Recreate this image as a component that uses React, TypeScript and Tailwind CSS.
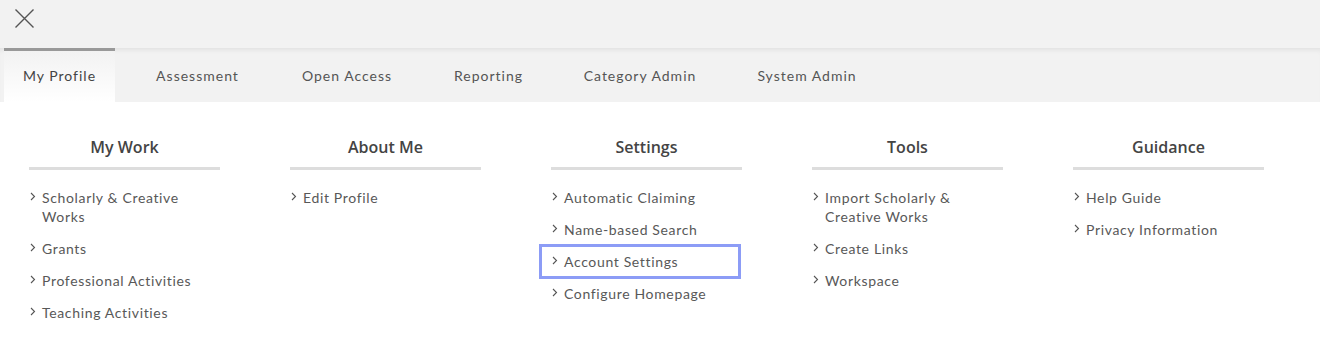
import React from "react";

const columns: { title: string; items: string[] }[] = [
  { title: "My Work", items: ["Scholarly & Creative Works", "Grants", "Professional Activities", "Teaching Activities"] },
  { title: "About Me", items: ["Edit Profile"] },
  { title: "Settings", items: ["Automatic Claiming", "Name-based Search", "Account Settings", "Configure Homepage"] },
  { title: "Tools", items: ["Import Scholarly & Creative Works", "Create Links", "Workspace"] },
  { title: "Guidance", items: ["Help Guide", "Privacy Information"] },
];

const tabs: { label: string; w: string }[] = [
  { label: "My Profile", w: "w-[111px]" },
  { label: "Assessment", w: "w-[125px]" },
  { label: "Open Access", w: "w-[134px]" },
  { label: "Reporting", w: "w-[109px]" },
  { label: "Category Admin", w: "w-[154px]" },
  { label: "System Admin", w: "w-[140px]" },
];

function Chevron() {
  return (
    <svg width="6" height="9" viewBox="0 0 6 9" className="shrink-0 mt-[4px]">
      <path d="M1 1 L4.5 4.5 L1 8" fill="none" stroke="#555" strokeWidth="1.1" />
    </svg>
  );
}

export default function App() {
  return (
    <div className="w-[1320px] h-[347px] bg-white overflow-hidden" style={{ fontFamily: "Lato, 'Open Sans', sans-serif" }}>
      <div className="h-[48px] bg-[#f2f2f2] flex items-start pl-[15px] pt-[9px]">
        <svg width="19" height="19" viewBox="0 0 19 19">
          <path d="M0.5 0.5 L18.5 18.5 M18.5 0.5 L0.5 18.5" stroke="#555" strokeWidth="1.4" />
        </svg>
      </div>
      <div className="h-[54px] bg-[#f2f2f2] flex items-stretch pl-[4px] gap-[20px] shadow-[inset_0_5px_5px_-3px_rgba(0,0,0,0.07)]">
        {tabs.map((t, i) => (
          <div
            key={t.label}
            className={
              i === 0
                ? `${t.w} flex items-center justify-center border-t-[3px] border-[#999999] bg-gradient-to-b from-[#f2f2f2] to-white text-[14px] tracking-[1px] text-[#444] pb-[3px]`
                : `${t.w} flex items-center justify-center text-[14px] tracking-[1px] text-[#555]`
            }
          >
            {t.label}
          </div>
        ))}
      </div>
      <div className="pl-[29px] pt-[33px] flex gap-[70px]">
        {columns.map((c) => (
          <div key={c.title} className="w-[191px]">
            <div
              className="text-center text-[16px] leading-[24px] font-semibold text-[#444] pb-[8px] border-b-[3px] border-[#dddddd]"
              style={{ fontFamily: "'Open Sans', sans-serif" }}
            >
              {c.title}
            </div>
            <ul className="mt-[18px] flex flex-col gap-[13px]">
              {c.items.map((it) => (
                <li key={it} className="relative flex gap-[6px] pl-[1px] text-[14px] leading-[19px] tracking-[0.65px] text-[#585858]">
                  <Chevron />
                  <span>{it}</span>
                  {it === "Account Settings" && (
                    <span className="absolute left-[-12px] right-[1px] top-[-8px] bottom-[-8px] border-[3px] border-[#8c9cf6] pointer-events-none" />
                  )}
                </li>
              ))}
            </ul>
          </div>
        ))}
      </div>
    </div>
  );
}
